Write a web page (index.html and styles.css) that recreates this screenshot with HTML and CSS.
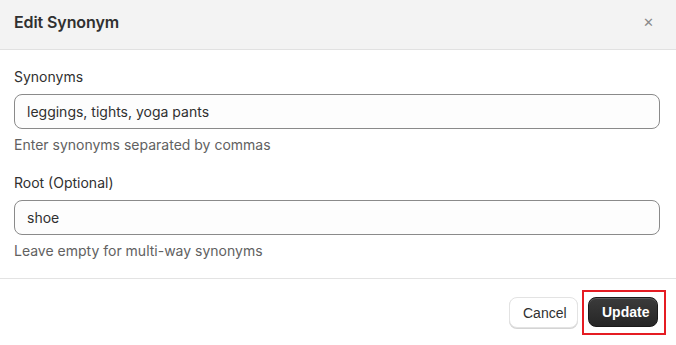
FILE: index.html
```html
<!doctype html>
<html>
    <head>
        <meta charset="UTF-8">
        <title>Edit Synonym</title>
        <link rel="stylesheet" href="styles.css">
    </head>
    <body>
        <div class="modal">
            <div class="modal-header">
                <h2 class="modal-title">Edit Synonym</h2>
                <span class="close">&#x2715;</span>
            </div>
            <div class="modal-body">
                <div class="field">
                    <label class="label">Synonyms</label>
                    <input class="input" type="text" value="leggings, tights, yoga pants">
                    <p class="help">Enter synonyms separated by commas</p>
                </div>
                <div class="field">
                    <label class="label">Root (Optional)</label>
                    <input class="input" type="text" value="shoe">
                    <p class="help">Leave empty for multi-way synonyms</p>
                </div>
            </div>
            <div class="modal-footer">
                <button class="btn btn-cancel">Cancel</button>
                <div class="highlight">
                    <button class="btn btn-primary">Update</button>
                </div>
            </div>
        </div>
    </body>
</html>
```

FILE: styles.css
```css
*{
    margin: 0;
    padding: 0;
    box-sizing: border-box;
}
body{
    background: #fff;
    font-family: Inter, "Liberation Sans", sans-serif;
    color: #303030;
}
.modal{
    width: 676px;
    height: 345px;
}
.modal-header{
    display: flex;
    align-items: center;
    justify-content: space-between;
    height: 50px;
    padding: 0 22px 6px 14px;
    background: #f3f3f3;
    border-bottom: 1px solid #e1e1e1;
}
.modal-title{
    font-size: 16px;
    font-weight: 600;
    color: #303030;
    letter-spacing: -0.1px;
}
.close{
    font-size: 13px;
    color: #8a8a8a;
}
.modal-body{
    padding: 18px 16px 18px 14px;
    border-bottom: 1px solid #e3e3e3;
}
.field{
    display: flex;
    flex-direction: column;
}
.field + .field{
    margin-top: 20px;
}
.label{
    font-size: 14px;
    line-height: 18px;
    margin-bottom: 8px;
}
.input{
    height: 35px;
    border: 1px solid #8a8a8a;
    border-radius: 8px;
    padding: 0 12px;
    font-family: Inter, "Liberation Sans", sans-serif;
    font-size: 14px;
    color: #303030;
    background: #fdfdfd;
    outline: none;
}
.help{
    font-size: 14px;
    line-height: 18px;
    margin-top: 7px;
    color: #616161;
}
.modal-footer{
    display: flex;
    justify-content: flex-end;
    align-items: center;
    padding: 11px 10px 0 0;
    gap: 4px;
}
.btn{
    height: 31px;
    border-radius: 8px;
    font-family: "Liberation Sans", Arial, sans-serif;
    font-size: 14px;
    padding: 0 13px;
    cursor: pointer;
}
.btn-cancel{
    background: #fff;
    color: #303030;
    border: 1px solid #e3e3e3;
    box-shadow: 0 1px 0 #d4d4d4;
    width: 69px;
}
.highlight{
    position: relative;
    padding: 5px 6px 6px 4px;
    border: 2px solid #e51c23;
}
.btn-primary{
    background: linear-gradient(#3b3b3b, #262626);
    color: #fff;
    font-weight: bold;
    border: 1px solid #1a1a1a;
    box-shadow: inset 0 1px 0 #5a5a5a;
    width: 70px;
    height: 30px;
}
```
